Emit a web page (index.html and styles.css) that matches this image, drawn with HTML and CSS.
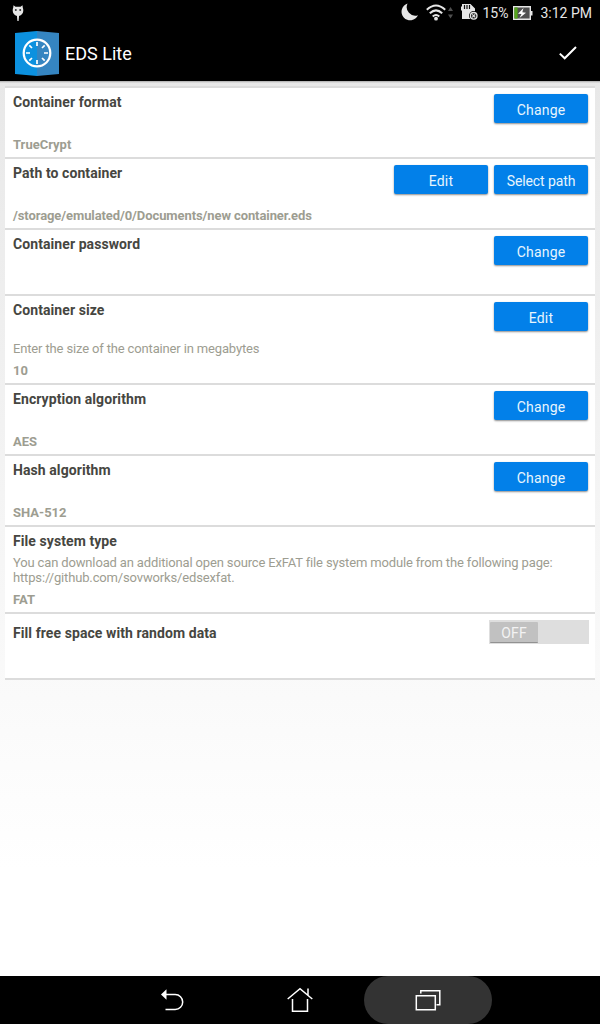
FILE: index.html
```html
<!DOCTYPE html>
<html lang="en">
<head>
<meta charset="utf-8">
<title>EDS Lite</title>
<link rel="stylesheet" href="styles.css">
</head>
<body>
<header class="status">
  <svg class="debug" width="12" height="17" viewBox="0 0 12 17"><path d="M1.500 .3L3.500 1.700h5L10.500 .3l.3 2.500c1.500 4-.5 7.200-3.800 8.200v.8L6.600 16H5.400L5 11.800V11C1.700 10-.3 6.800 1.200 2.800z" fill="#e6e6e6"/><circle cx="3.800" cy="5" r="1" fill="#333"/><circle cx="8.200" cy="5" r="1" fill="#333"/></svg>
  <svg class="moon" width="18" height="18" viewBox="0 0 18 18"><path d="M6.500 .5A8.600 8.600 0 1 0 17 12.200 8.600 8.600 0 0 1 6.500 .5z" fill="#e6e6e6"/></svg>
  <svg class="wifi" width="28" height="18" viewBox="0 0 28 18"><g fill="none" stroke="#e6e6e6" stroke-width="2"><path d="M.8 5.800q9.200-8.600 18.400 0M3.800 9.200q6.200-5.600 12.400 0M6.700 12.400q3.300-2.900 6.600 0"/></g><circle cx="10" cy="14.700" r="1.900" fill="#e6e6e6"/><path d="M22 7l2.500-4L27 7zM22 10.500h5l-2.500 4z" fill="#505050"/></svg>
  <svg class="sd" width="18" height="18" viewBox="0 0 18 18"><path d="M1 1h8.500L14 5.500V16H1V8L0 7V4l1-1z" fill="#e6e6e6"/><path d="M3.500 2v4M6 2v4M8.500 2v4" stroke="#111" stroke-width="1.200"/><circle cx="12.700" cy="12.800" r="4.700" fill="#000"/><circle cx="12.700" cy="12.800" r="3.300" fill="#222" stroke="#e6e6e6" stroke-width="1.300"/><path d="M11.200 11.300l3 3m0-3l-3 3" stroke="#e6e6e6" stroke-width="1.200"/></svg>
  <span class="percent">15%</span>
  <svg class="battery" width="20" height="14" viewBox="0 0 20 14"><path d="M.7.700h16.600v12.600H.7z" fill="#505050" stroke="#e6e6e6" stroke-width="1.400"/><path d="M1.400 1.400h3.200v11.200H1.400z" fill="#55a51c"/><path d="M18 5h1.500v4.500H18z" fill="#e6e6e6"/><path d="M10.500 2L5 7.700l3.500.3-2 4 6.500-5.300-3.700-.4z" fill="#fff"/></svg>
  <span class="clock">3:12 PM</span>
</header>
<div class="appbar">
  <svg class="logo" width="44" height="45" viewBox="0 0 44 45"><path d="M0 2L22 0v45L0 43z" fill="#0c91df"/><path d="M22 0l22 2v41l-22 2z" fill="#3585c1"/><circle cx="22" cy="22" r="13.300" fill="none" stroke="#fff" stroke-width="2.200"/><g stroke="#fff" stroke-width="1.700"><path d="M22 11v4M22 29v4M11 22h4M29 22h4M14.300 14.300l2.700 2.700M27 27l2.700 2.700M14.300 29.700l2.700-2.700M27 17l2.700-2.700"/></g></svg>
  <h1 class="app-title">EDS Lite</h1>
  <svg class="check" width="18" height="14" viewBox="0 0 18 14"><path d="M.8 7.600l4.900 4.700L17 1" fill="none" stroke="#fff" stroke-width="2"/></svg>
</div>
<main class="page">
  <div class="list">
    <section class="row"><div class="text"><h2 class="title">Container format</h2><p class="value">TrueCrypt</p></div><div class="actions"><button class="btn">Change</button></div></section>
    <section class="row"><div class="text"><h2 class="title">Path to container</h2><p class="value path">/storage/emulated/0/Documents/new container.eds</p></div><div class="actions"><button class="btn">Edit</button><button class="btn select">Select path</button></div></section>
    <section class="row short"><div class="text"><h2 class="title">Container password</h2></div><div class="actions"><button class="btn">Change</button></div></section>
    <section class="row size"><div class="text"><h2 class="title">Container size</h2><p class="hint">Enter the size of the container in megabytes</p><p class="value">10</p></div><div class="actions"><button class="btn">Edit</button></div></section>
    <section class="row"><div class="text"><h2 class="title">Encryption algorithm</h2><p class="value">AES</p></div><div class="actions"><button class="btn">Change</button></div></section>
    <section class="row"><div class="text"><h2 class="title">Hash algorithm</h2><p class="value">SHA-512</p></div><div class="actions"><button class="btn">Change</button></div></section>
    <section class="row filesystem"><div class="text"><h2 class="title">File system type</h2><p class="hint">You can download an additional open source ExFAT file system module from the following page:<br>https://github.com/sovworks/edsexfat.</p><p class="value">FAT</p></div></section>
    <section class="row short fill"><div class="text"><h2 class="title">Fill free space with random data</h2></div><div class="toggle"><span class="thumb">OFF</span></div></section>
  </div>
</main>
<nav class="navbar">
  <div class="nav-item"><svg width="24" height="24" viewBox="0 0 24 24"><path d="M5.500 6.500h9.700a7.200 7.200 0 0 1 0 15H5.500" fill="none" stroke="#fff" stroke-width="1.500"/><path d="M1 6.500l5.500-5.200v10.400z" fill="#fff"/></svg></div>
  <div class="nav-item"><svg width="26" height="26" viewBox="0 0 26 26"><path d="M.7 12L13 1.700 25.300 12M21 8V1.500M5.500 12v12.200h15V12" fill="none" stroke="#fff" stroke-width="1.500"/></svg></div>
  <div class="nav-item active"><svg width="26" height="22" viewBox="0 0 26 22"><path d="M1.300 6.700h19v14h-19zM5.800 4.500V1.700h19v14h-3.300" fill="none" stroke="#fff" stroke-width="1.500"/></svg></div>
</nav>
</body>
</html>
```
FILE: styles.css
```css
* { box-sizing: border-box; }
body { margin: 0; width: 600px; height: 1024px; display: flex; flex-direction: column; font-family: Roboto, sans-serif; background: #000; overflow: hidden; }
h1, h2, p { margin: 0; }
svg { display: block; flex: none; }
.status { height: 26px; flex: none; display: flex; align-items: center; padding: 0 8px 0 12px; color: #e6e6e6; font-size: 14px; white-space: nowrap; }
.debug { margin-top: 1px; }
.moon { margin-left: auto; margin-top: -2px; }
.wifi { margin-left: 7px; }
.sd { margin-left: 7px; margin-top: -2px; }
.percent { margin-left: 3px; }
.battery { margin-left: 5px; margin-top: -1px; }
.clock { margin-left: 7px; }
.appbar { height: 55px; flex: none; display: flex; align-items: center; padding: 0 23px 0 15px; }
.app-title { margin-left: 6px; color: #fff; font-size: 18px; font-weight: 400; line-height: 22px; }
.logo { margin-top: -1px; }
.check { margin-left: auto; margin-top: -1px; }
.page { flex: 1; padding: 5px 5px 0; background: linear-gradient(#aaa, rgba(170, 170, 170, 0)) 0 0 / 100% 2px no-repeat, linear-gradient(#e8e8e8, #fff 88%); }
.list { border-top: 2px solid #dcdcdc; }
.row { display: flex; height: 71px; padding: 6px 7px 4px 8px; background: #fff; border-bottom: 2px solid #dcdcdc; }
.row.short { height: 66px; }
.row.size { height: 89px; }
.row.filesystem { height: 87px; }
.text { flex: 1; display: flex; flex-direction: column; white-space: nowrap; }
.title { color: #464641; font-size: 14px; line-height: 16px; font-weight: 700; letter-spacing: .08px; }
.value { margin-top: auto; color: #9d9d91; font-size: 13px; line-height: 16px; font-weight: 700; }
.path { letter-spacing: -.09px; }
.hint { color: #9d9d91; font-size: 13px; line-height: 15px; letter-spacing: -.15px; }
.size .hint { margin-top: 23px; }
.filesystem .hint { margin-top: 6px; }
.fill .title { margin-top: 5px; }
.actions { display: flex; gap: 6px; align-items: flex-start; }
.btn { width: 94px; height: 29px; padding: 3px 0 0; border: 0; border-radius: 2px; background: #0280e9; color: #e8f5fd; font: 14px Roboto, sans-serif; letter-spacing: .2px; box-shadow: 0 1px 2px rgba(0, 0, 0, .45); }
.btn.select { letter-spacing: -.1px; }
.toggle { width: 100px; height: 24px; margin-right: -1px; padding: 2px 1px 1px; background: #dedede; }
.thumb { display: block; width: 48px; height: 21px; background: #c1c1c1; border-bottom: 1px solid #929292; border-radius: 1px; color: #f3f3f3; font-size: 14px; line-height: 23px; letter-spacing: .2px; text-align: center; }
.navbar { height: 48px; flex: none; display: flex; padding-left: 108px; }
.nav-item { width: 128px; height: 48px; display: flex; align-items: center; justify-content: center; }
.nav-item.active { border-radius: 24px; background: #333; }
```
